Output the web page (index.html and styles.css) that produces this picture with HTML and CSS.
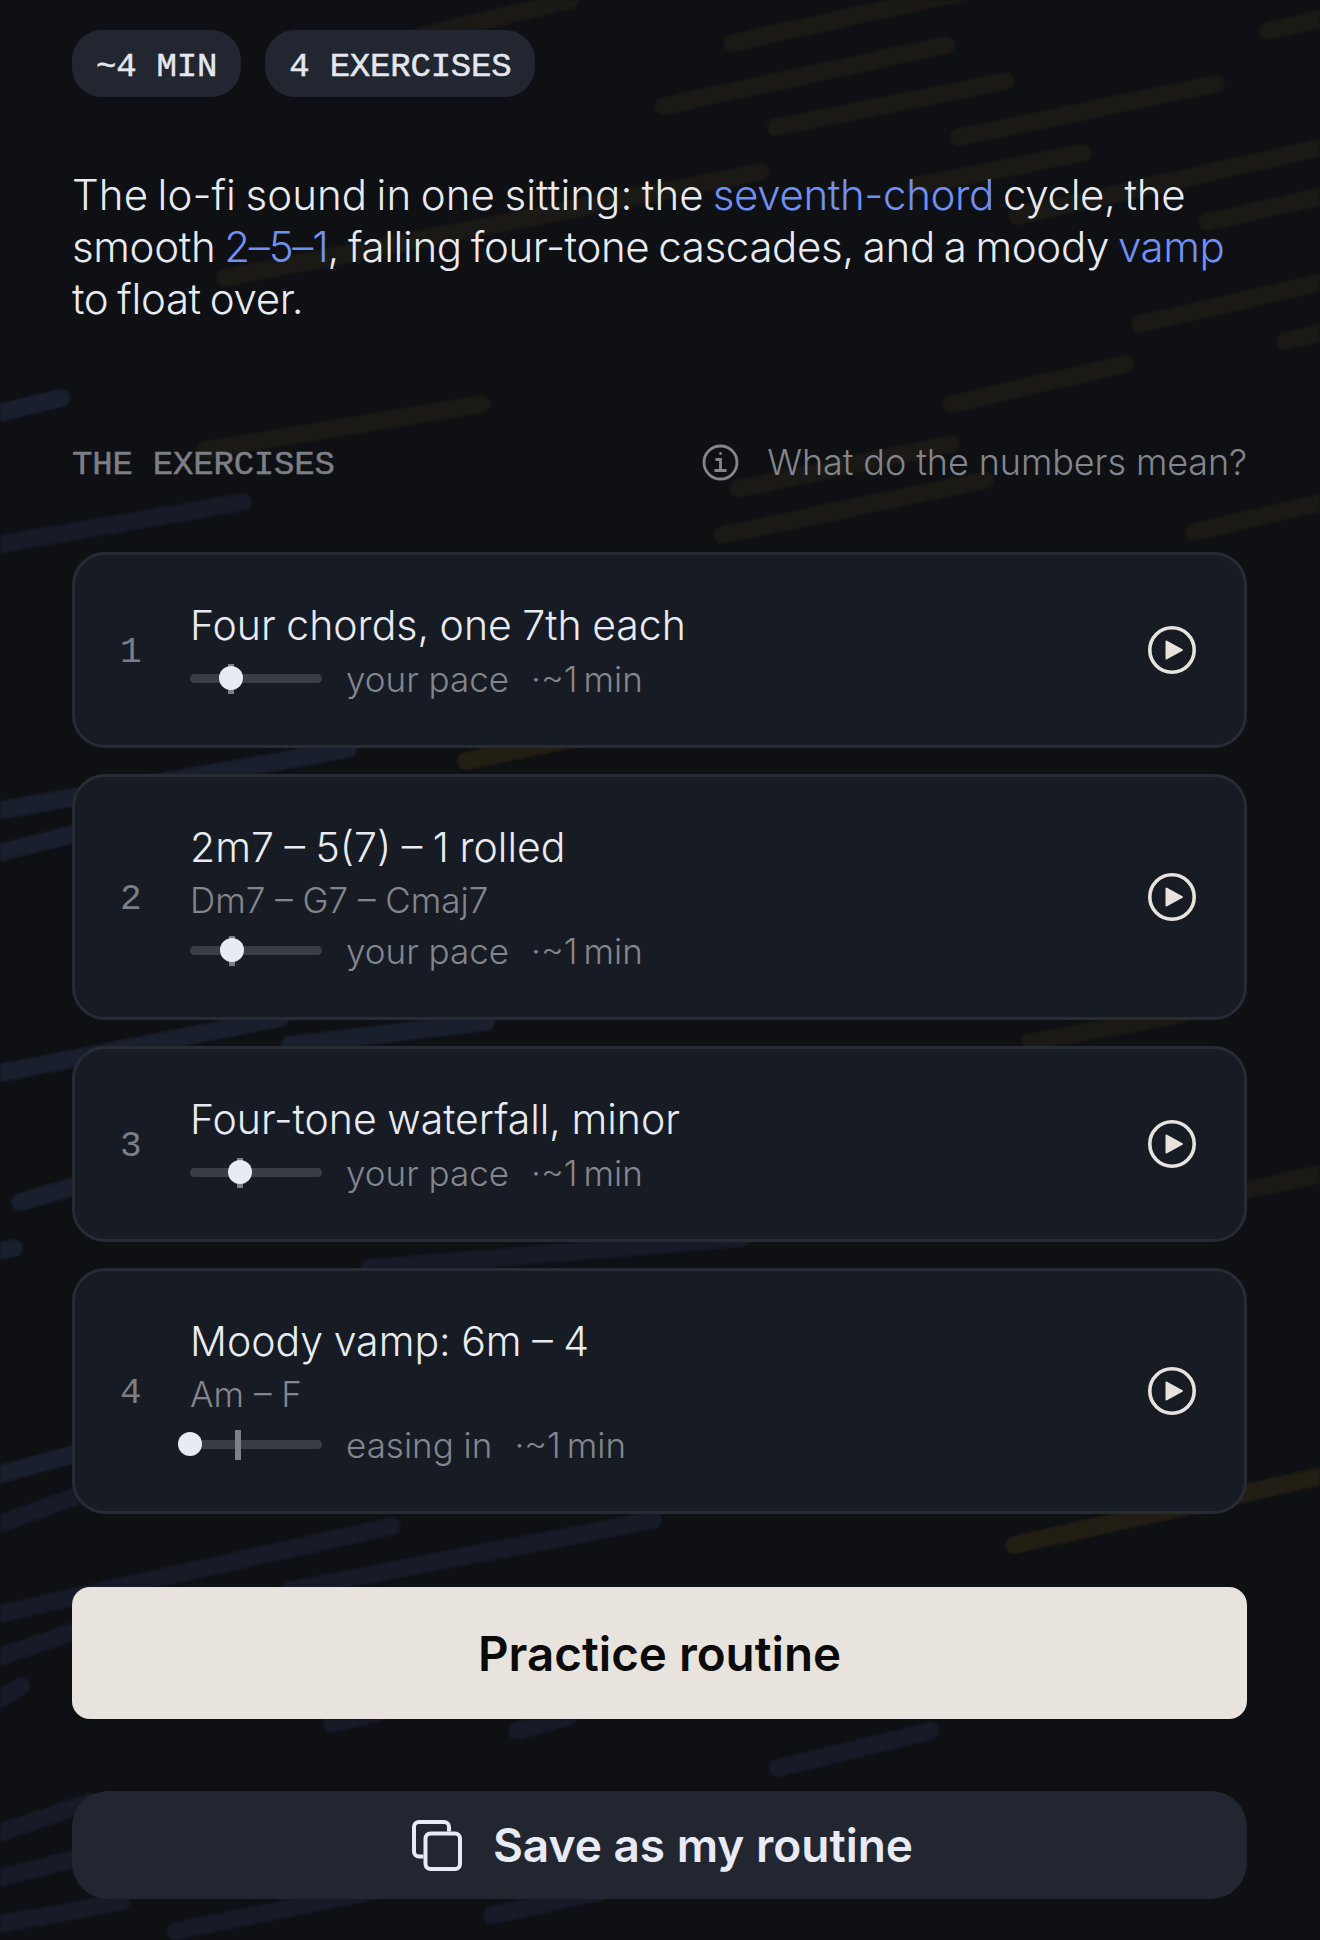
FILE: index.html
```html
<!DOCTYPE html>
<html lang="en">
<head>
    <meta charset="UTF-8">
    <meta name="viewport" content="width=device-width, initial-scale=1.0">
    <title>Lo-fi routine</title>
    <link rel="stylesheet" href="styles.css">
</head>
<body>
    <!-- rain streaks behind everything -->
    <svg class="streaks" width="1320" height="1940" viewBox="0 0 1320 1940" aria-hidden="true">
        <g class="amber">
            <line x1="420" y1="36" x2="570" y2="0"/>
            <line x1="732" y1="43" x2="1018" y2="-20"/>
            <line x1="664" y1="106" x2="946" y2="45"/>
            <line x1="776" y1="127" x2="1005" y2="81"/>
            <line x1="959" y1="137" x2="1216" y2="84"/>
            <line x1="1268" y1="31" x2="1340" y2="14"/>
            <line x1="916" y1="186" x2="1083" y2="153"/>
            <line x1="225" y1="278" x2="760" y2="172"/>
            <line x1="1017" y1="216" x2="1340" y2="143"/>
            <line x1="1207" y1="222" x2="1340" y2="192"/>
            <line x1="1140" y1="324" x2="1340" y2="278"/>
            <line x1="1285" y1="341" x2="1340" y2="328"/>
            <line x1="952" y1="404" x2="1125" y2="364"/>
            <line x1="206" y1="450" x2="482" y2="404"/>
            <line x1="738" y1="489" x2="951" y2="444"/>
            <line x1="722" y1="535" x2="985" y2="480"/>
            <line x1="1194" y1="532" x2="1340" y2="498"/>
            <line class="strong" x1="466" y1="761" x2="640" y2="725"/>
            <line x1="1030" y1="1042" x2="1180" y2="1015"/>
            <line x1="1246" y1="1190" x2="1340" y2="1170"/>
            <line class="strong" x1="1014" y1="1545" x2="1340" y2="1472"/>
        </g>
        <g class="blue">
            <line x1="-10" y1="415" x2="61" y2="398"/>
            <line x1="-10" y1="812" x2="348" y2="749"/>
            <line x1="-10" y1="855" x2="90" y2="830"/>
            <line x1="-10" y1="1075" x2="280" y2="1018"/>
            <line x1="290" y1="1045" x2="486" y2="1022"/>
            <line x1="20" y1="1202" x2="90" y2="1182"/>
            <line x1="-10" y1="1253" x2="14" y2="1248"/>
            <line x1="-10" y1="1477" x2="100" y2="1447"/>
        </g>
        <g class="blue faint">
            <line x1="-10" y1="546" x2="243" y2="502"/>
            <line x1="370" y1="1268" x2="742" y2="1238"/>
            <line x1="-10" y1="1527" x2="100" y2="1488"/>
            <line x1="-10" y1="1616" x2="392" y2="1526"/>
            <line x1="290" y1="1590" x2="653" y2="1520"/>
            <line x1="-10" y1="1660" x2="90" y2="1626"/>
            <line x1="-10" y1="1705" x2="21" y2="1686"/>
            <line x1="332" y1="1724" x2="380" y2="1712"/>
            <line x1="517" y1="1731" x2="570" y2="1716"/>
            <line x1="778" y1="1768" x2="930" y2="1731"/>
            <line x1="-10" y1="1836" x2="90" y2="1802"/>
            <line x1="-10" y1="1880" x2="90" y2="1855"/>
            <line x1="-10" y1="1926" x2="121" y2="1902"/>
            <line x1="176" y1="1931" x2="380" y2="1890"/>
            <line x1="492" y1="1915" x2="600" y2="1892"/>
        </g>
    </svg>

    <main class="page">
        <div class="chips">
            <span class="chip">~4 MIN</span>
            <span class="chip">4 EXERCISES</span>
        </div>

        <p class="intro"><span class="lead">The lo-fi sound in one sitting: the</span> <a class="term">seventh-chord</a> cycle, the smooth <a class="term term-num">2–5–1</a>, falling four-tone cascades, and a moody <a class="term">vamp</a> to float over.</p>

        <div class="section-head">
            <h2 class="section-label">THE EXERCISES</h2>
            <div class="help">
                <svg class="help-icon" width="37" height="37" viewBox="0 0 37 37" fill="none" stroke="currentColor" stroke-width="2.8">
                    <circle cx="18.500" cy="18.500" r="16.500"/>
                    <path d="M13.500 15.500h5v11M12.500 26.500h12"/>
                    <circle cx="18.500" cy="9.500" r="1.400" fill="currentColor" stroke="none"/>
                </svg>
                <span>What do the numbers mean?</span>
            </div>
        </div>

        <div class="list">
            <div class="card">
                <span class="num">1</span>
                <div class="info">
                    <div class="title">Four chords, one 7th each</div>
                    <div class="meta">
                        <div class="track"><i class="tick" style="left:41px"></i><i class="thumb" style="left:41px"></i></div>
                        <span class="pace">your pace</span><span class="dur">·~1 min</span>
                    </div>
                </div>
                <svg class="play" width="48" height="48" viewBox="0 0 48 48"><circle cx="24" cy="24" r="22.200" fill="none" stroke="currentColor" stroke-width="3.600"/><path d="M17.500 15.500a1 1 0 0 1 1.500-.8l15.500 8.600a.8.800 0 0 1 0 1.400l-15.500 8.600a1 1 0 0 1-1.500-.8z" fill="currentColor"/></svg>
            </div>
            <div class="card">
                <span class="num">2</span>
                <div class="info">
                    <div class="title">2m7 – 5(7) – 1 rolled</div>
                    <div class="sub">Dm7 – G7 – Cmaj7</div>
                    <div class="meta">
                        <div class="track"><i class="tick" style="left:42px"></i><i class="thumb" style="left:42px"></i></div>
                        <span class="pace">your pace</span><span class="dur">·~1 min</span>
                    </div>
                </div>
                <svg class="play" width="48" height="48" viewBox="0 0 48 48"><circle cx="24" cy="24" r="22.200" fill="none" stroke="currentColor" stroke-width="3.600"/><path d="M17.500 15.500a1 1 0 0 1 1.500-.8l15.500 8.600a.8.800 0 0 1 0 1.400l-15.500 8.600a1 1 0 0 1-1.500-.8z" fill="currentColor"/></svg>
            </div>
            <div class="card">
                <span class="num">3</span>
                <div class="info">
                    <div class="title">Four-tone waterfall, minor</div>
                    <div class="meta">
                        <div class="track"><i class="tick" style="left:50px"></i><i class="thumb" style="left:50px"></i></div>
                        <span class="pace">your pace</span><span class="dur">·~1 min</span>
                    </div>
                </div>
                <svg class="play" width="48" height="48" viewBox="0 0 48 48"><circle cx="24" cy="24" r="22.200" fill="none" stroke="currentColor" stroke-width="3.600"/><path d="M17.500 15.500a1 1 0 0 1 1.500-.8l15.500 8.600a.8.800 0 0 1 0 1.400l-15.500 8.600a1 1 0 0 1-1.500-.8z" fill="currentColor"/></svg>
            </div>
            <div class="card">
                <span class="num">4</span>
                <div class="info">
                    <div class="title">Moody vamp: 6m – 4</div>
                    <div class="sub">Am – F</div>
                    <div class="meta">
                        <div class="track"><i class="tick" style="left:48px"></i><i class="thumb" style="left:0px"></i></div>
                        <span class="pace">easing in</span><span class="dur">·~1 min</span>
                    </div>
                </div>
                <svg class="play" width="48" height="48" viewBox="0 0 48 48"><circle cx="24" cy="24" r="22.200" fill="none" stroke="currentColor" stroke-width="3.600"/><path d="M17.500 15.500a1 1 0 0 1 1.500-.8l15.500 8.600a.8.800 0 0 1 0 1.400l-15.500 8.600a1 1 0 0 1-1.500-.8z" fill="currentColor"/></svg>
            </div>
        </div>

        <button class="btn-primary">Practice routine</button>
        <button class="btn-secondary">
            <svg width="50" height="51" viewBox="0 0 50 51" fill="none" stroke="currentColor" stroke-width="4">
                <path d="M11.500 36.500H7a5 5 0 0 1-5-5V7a5 5 0 0 1 5-5h25a5 5 0 0 1 5 5v4.500"/>
                <rect x="13.500" y="13.500" width="34.500" height="35.500" rx="5"/>
            </svg>
            Save as my routine
        </button>
    </main>
</body>
</html>
```

FILE: styles.css
```css
* {
    box-sizing: border-box;
}
html, body {
    margin: 0;
    height: 1940px;
    overflow: hidden;
}
body {
    position: relative;
    background: #0e1014;
    color: #e8ebf2;
    font-family: Inter, "Noto Sans", sans-serif;
    font-weight: 300;
}
.streaks {
    position: absolute;
    top: 0;
    left: 0;
    filter: blur(1px);
}
.streaks line {
    stroke-width: 18;
    stroke-linecap: round;
}
.amber line { stroke: #1b1915; }
.amber line.strong { stroke: #221e14; }
.blue line { stroke: #1a1f2d; }
.faint line { stroke: #161b27; }

.page {
    position: relative;
    padding: 30px 73px 0 72px;
}
.chips {
    display: flex;
    gap: 24px;
}
.chip {
    height: 67px;
    padding: 6px 24px 0;
    display: flex;
    align-items: center;
    border-radius: 30px;
    background: #222630;
    color: #e4e7ee;
    font-family: "Liberation Mono", monospace;
    font-size: 34px;
    letter-spacing: -0.2px;
    -webkit-text-stroke: 0.5px currentColor;
}
.intro {
    margin: 72px 0 0;
    font-size: 42px;
    line-height: 52px;
    letter-spacing: -0.35px;
    word-spacing: -2.5px;
}
.lead { letter-spacing: 0.1px; }
.term { color: #7190f5; }
.term-num { letter-spacing: -1.2px; }

.section-head {
    margin-top: 117px;
    height: 40px;
    display: flex;
    align-items: center;
    justify-content: space-between;
}
.section-label {
    margin: 0;
    padding-top: 5px;
    font-family: "Liberation Mono", monospace;
    font-size: 34px;
    font-weight: 400;
    letter-spacing: -0.2px;
    color: #7c7f86;
    -webkit-text-stroke: 0.5px currentColor;
}
.help {
    display: flex;
    align-items: center;
    gap: 28px;
    font-size: 36px;
    letter-spacing: -0.1px;
    color: #83868d;
}
.list {
    margin-top: 70px;
    display: flex;
    flex-direction: column;
    gap: 26px;
}
.card {
    display: flex;
    align-items: center;
    padding: 43px 48px 43px 45px;
    background: #171b23;
    border: 3px solid #272b33;
    border-radius: 33px;
}
.num {
    width: 70px;
    padding-top: 4px;
    font-family: "Liberation Mono", monospace;
    font-size: 36px;
    color: #7c7f86;
}
.info {
    flex: 1;
}
.title {
    font-size: 41px;
    line-height: 54px;
    word-spacing: -1px;
}
.sub {
    padding-top: 2px;
    font-size: 35px;
    line-height: 48px;
    color: #83868d;
}
.meta {
    display: flex;
    align-items: center;
    height: 50px;
    padding-top: 3px;
    font-size: 35px;
    color: #83868d;
}
.track {
    position: relative;
    width: 132px;
    height: 9px;
    margin-right: 24px;
    border-radius: 5px;
    background: #3a3d45;
}
.tick {
    position: absolute;
    top: -10px;
    width: 6px;
    height: 30px;
    margin-left: -3px;
    background: #7c7f86;
}
.thumb {
    position: absolute;
    top: -8px;
    width: 24px;
    height: 24px;
    margin-left: -12px;
    border-radius: 50%;
    background: #e8ebf4;
}
.dur {
    margin-left: 22px;
    word-spacing: -4px;
}
.play {
    color: #e8e3dc;
}
.btn-primary, .btn-secondary {
    width: 100%;
    display: flex;
    align-items: center;
    justify-content: center;
    border: none;
    font-family: Inter, "Noto Sans", sans-serif;
    font-weight: 600;
}
.btn-primary {
    height: 132px;
    margin-top: 73px;
    border-radius: 18px;
    background: #e8e3dc;
    color: #0a0a0a;
    font-size: 47.500px;
}
.btn-secondary {
    height: 108px;
    margin-top: 72px;
    padding: 0 6px 0 12px;
    gap: 31px;
    border-radius: 36px;
    background: #222630;
    color: #e8ebf5;
    font-size: 46px;
}
```
